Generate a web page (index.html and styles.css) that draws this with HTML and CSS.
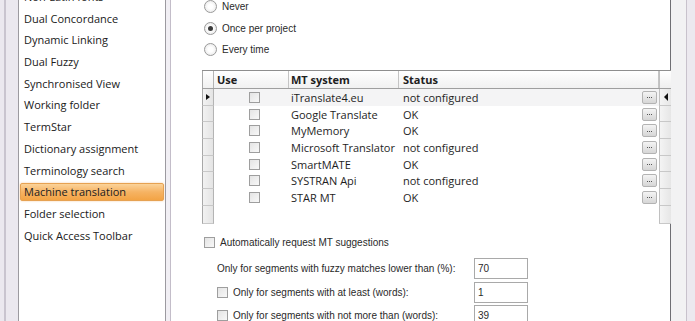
FILE: index.html
```html
<!DOCTYPE html>
<html>
<head>
<meta charset="utf-8">
<link rel="stylesheet" href="styles.css">
</head>
<body>
<div class="window">
  <div class="edge-left"><div class="edge-line"></div></div>
  <div class="nav">
    <ul class="nav-list">
      <li>Non-Latin fonts</li>
      <li>Dual Concordance</li>
      <li>Dynamic Linking</li>
      <li>Dual Fuzzy</li>
      <li>Synchronised View</li>
      <li>Working folder</li>
      <li>TermStar</li>
      <li>Dictionary assignment</li>
      <li>Terminology search</li>
      <li class="selected">Machine translation</li>
      <li>Folder selection</li>
      <li>Quick Access Toolbar</li>
    </ul>
  </div>
  <div class="gutter"></div>
  <div class="content">
    <div class="radios">
      <div class="radio-row"><span class="radio"></span><span>Never</span></div>
      <div class="radio-row"><span class="radio checked"></span><span>Once per project</span></div>
      <div class="radio-row"><span class="radio"></span><span>Every time</span></div>
    </div>
    <div class="grid">
      <div class="grid-row head">
        <div class="rh"></div>
        <div class="c use">Use</div>
        <div class="c sys">MT system</div>
        <div class="c stat">Status</div>
        <div class="c btn"></div>
        <div class="rh2"></div>
      </div>
      <div class="grid-row current">
        <div class="rh"><span class="tri-r"></span></div>
        <div class="c use"><span class="cb"></span></div>
        <div class="c sys">iTranslate4.eu</div>
        <div class="c stat">not configured</div>
        <div class="c btn"><span class="dots"><i></i><i></i><i></i></span></div>
        <div class="rh2"><span class="tri-l"></span></div>
      </div>
      <div class="grid-row">
        <div class="rh"></div>
        <div class="c use"><span class="cb"></span></div>
        <div class="c sys">Google Translate</div>
        <div class="c stat">OK</div>
        <div class="c btn"><span class="dots"><i></i><i></i><i></i></span></div>
        <div class="rh2"></div>
      </div>
      <div class="grid-row">
        <div class="rh"></div>
        <div class="c use"><span class="cb"></span></div>
        <div class="c sys">MyMemory</div>
        <div class="c stat">OK</div>
        <div class="c btn"><span class="dots"><i></i><i></i><i></i></span></div>
        <div class="rh2"></div>
      </div>
      <div class="grid-row">
        <div class="rh"></div>
        <div class="c use"><span class="cb"></span></div>
        <div class="c sys">Microsoft Translator</div>
        <div class="c stat">not configured</div>
        <div class="c btn"><span class="dots"><i></i><i></i><i></i></span></div>
        <div class="rh2"></div>
      </div>
      <div class="grid-row">
        <div class="rh"></div>
        <div class="c use"><span class="cb"></span></div>
        <div class="c sys">SmartMATE</div>
        <div class="c stat">OK</div>
        <div class="c btn"><span class="dots"><i></i><i></i><i></i></span></div>
        <div class="rh2"></div>
      </div>
      <div class="grid-row">
        <div class="rh"></div>
        <div class="c use"><span class="cb"></span></div>
        <div class="c sys">SYSTRAN Api</div>
        <div class="c stat">not configured</div>
        <div class="c btn"><span class="dots"><i></i><i></i><i></i></span></div>
        <div class="rh2"></div>
      </div>
      <div class="grid-row">
        <div class="rh"></div>
        <div class="c use"><span class="cb"></span></div>
        <div class="c sys">STAR MT</div>
        <div class="c stat">OK</div>
        <div class="c btn"><span class="dots"><i></i><i></i><i></i></span></div>
        <div class="rh2"></div>
      </div>
      <div class="grid-row empty">
        <div class="rh"></div>
        <div class="c fill"></div>
        <div class="rh2"></div>
      </div>
    </div>
    <div class="auto-row"><span class="cb"></span><span>Automatically request MT suggestions</span></div>
    <div class="opts">
      <div class="opt-row">
        <div class="opt-label">Only for segments with fuzzy matches lower than (%):</div>
        <div class="field">70</div>
      </div>
      <div class="opt-row">
        <div class="opt-label"><span class="cb"></span><span>Only for segments with at least (words):</span></div>
        <div class="field">1</div>
      </div>
      <div class="opt-row">
        <div class="opt-label"><span class="cb"></span><span>Only for segments with not more than (words):</span></div>
        <div class="field">39</div>
      </div>
    </div>
  </div>
  <div class="edge-right"><div class="edge-right-inner"></div></div>
</div>
</body>
</html>
```

FILE: styles.css
```css
html, body {
  margin: 0;
  padding: 0;
  background: #ffffff;
}
.window {
  width: 695px;
  height: 321px;
  overflow: hidden;
  display: flex;
  font-family: "Liberation Sans", Arial, sans-serif;
  font-size: 10px;
  color: #1e1e1e;
}
.edge-left {
  width: 18px;
  flex: none;
  background: #ebe8ef;
  display: flex;
}
.edge-line {
  width: 2px;
  margin-left: 4px;
  background: #c9c4cf;
}
.nav {
  width: 146px;
  flex: none;
  border-left: 1px solid #9c9aa0;
  border-right: 1px solid #9c9aa0;
  background: #ffffff;
  overflow: hidden;
}
.nav-list {
  list-style: none;
  margin: -12px 0 0 0;
  padding: 0;
  font-family: "Open Sans", "Noto Sans", sans-serif;
  font-size: 11px;
}
.nav-list li {
  height: 18px;
  line-height: 18px;
  margin: 0 1px 3.7px 1px;
  padding-left: 4px;
  white-space: nowrap;
  color: #202020;
}
.nav-list li.selected {
  background: linear-gradient(#fbd39a, #f6b363 50%, #f3a445);
  border: 1px solid #e6a252;
  border-radius: 2px;
  height: 16px;
  line-height: 16px;
  padding-left: 3px;
  box-shadow: 0 0 2px rgba(240, 150, 60, 0.5);
}
.gutter {
  width: 4px;
  flex: none;
  background: #f1eff4;
  border-right: 1px solid #c3bdc9;
}
.content {
  width: 500px;
  flex: none;
  background: #ffffff;
  border-right: 1px solid #6f6f74;
  padding-left: 31px;
  box-sizing: border-box;
  display: flex;
  flex-direction: column;
}
.content > * {
  flex-shrink: 0;
}
.radios {
  margin-top: -4px;
  padding-left: 2px;
}
.radio-row {
  height: 21.5px;
  display: flex;
  align-items: center;
  gap: 5px;
  color: #2a2a2a;
}
.radio {
  width: 11px;
  height: 11px;
  border-radius: 50%;
  border: 1px solid #9a9a9a;
  background: radial-gradient(circle at 50% 50%, #ffffff 30%, #e2e2e2 100%);
  display: flex;
  align-items: center;
  justify-content: center;
}
.radio.checked::after {
  content: "";
  width: 5px;
  height: 5px;
  border-radius: 50%;
  background: #3a3a3a;
}
.grid {
  margin-top: 9.5px;
  width: 469px;
  height: 153px;
  border-top: 1px solid #8e8e8e;
  display: flex;
  flex-direction: column;
  font-family: "Open Sans", "Noto Sans", sans-serif;
  font-size: 11px;
}
.grid-row {
  display: flex;
  height: 16.7px;
  flex-shrink: 0;
  align-items: stretch;
}
.grid-row.head {
  height: 17px;
  background: linear-gradient(#ffffff, #f1f1f1);
  border-bottom: 1px solid #9f9f9f;
  font-weight: bold;
  color: #202020;
}
.grid-row.current {
  background: #f4f4f5;
}
.grid-row.empty {
  flex: 1;
}
.rh {
  width: 12px;
  flex: none;
  background: linear-gradient(90deg, #f2f2f2, #e4e4e4);
  border-right: 1px solid #b4b4b4;
  border-bottom: 1px solid #c8c8c8;
  border-left: 1px solid #a8a8a8;
  box-sizing: border-box;
  display: flex;
  align-items: center;
  justify-content: center;
}
.head .rh {
  background: linear-gradient(#ffffff, #f0f0f0);
  border-bottom: none;
}
.rh2 {
  width: 12px;
  flex: none;
  background: linear-gradient(90deg, #f4f4f4, #e6e6e6);
  border-left: 1px solid #c0c0c0;
  border-bottom: 1px solid #c8c8c8;
  box-sizing: border-box;
  display: flex;
  align-items: center;
  justify-content: center;
}
.head .rh2 {
  background: linear-gradient(#ffffff, #efefef);
  border-bottom: none;
}
.c {
  display: flex;
  align-items: center;
  white-space: nowrap;
  overflow: hidden;
  box-sizing: border-box;
}
.use { width: 75px; padding-left: 3px; }
.sys { width: 110px; padding-left: 2px; }
.stat { width: 240px; padding-left: 4px; }
.btn { width: 20px; justify-content: center; }
.fill { flex: 1; }
.head .use, .head .sys {
  border-right: 1px solid #c4c4c4;
}
.head .stat {
  border-right: 1px solid #c4c4c4;
  width: 260px;
}
.head .btn { display: none; }
.grid-row:not(.head) .use {
  justify-content: flex-start;
  padding-left: 35px;
}
.cb {
  width: 11px;
  height: 11px;
  flex: none;
  border: 1px solid #9e9e9e;
  background: linear-gradient(135deg, #e4e4e4, #f8f8f8);
  box-sizing: border-box;
}
.tri-r {
  width: 0;
  height: 0;
  border-top: 3.5px solid transparent;
  border-bottom: 3.5px solid transparent;
  border-left: 4px solid #111;
}
.tri-l {
  width: 0;
  height: 0;
  border-top: 4px solid transparent;
  border-bottom: 4px solid transparent;
  border-right: 4px solid #111;
}
.dots {
  width: 15px;
  height: 13px;
  border: 1px solid #b3b3b3;
  border-radius: 2px;
  background: linear-gradient(#f4f4f4, #d6d6d6);
  box-sizing: border-box;
  display: flex;
  align-items: center;
  justify-content: center;
  gap: 1px;
  padding-top: 1px;
}
.dots i {
  width: 1px;
  height: 1px;
  background: #555;
}
.auto-row {
  margin-top: 10px;
  height: 16px;
  display: flex;
  align-items: center;
  gap: 5px;
  padding-left: 2px;
  color: #2a2a2a;
}
.opts {
  margin-top: 8px;
  padding-left: 15px;
  display: flex;
  flex-direction: column;
  gap: 2.5px;
}
.opt-row {
  display: flex;
  align-items: center;
  height: 21px;
  flex-shrink: 0;
  color: #2a2a2a;
}
.opt-label {
  width: 257px;
  display: flex;
  align-items: center;
  gap: 5px;
  white-space: nowrap;
}
.field {
  width: 54px;
  height: 21px;
  border: 1px solid #a9a9a9;
  box-sizing: border-box;
  padding-left: 3px;
  line-height: 19px;
  color: #2a2a2a;
}
.edge-right {
  flex: 1;
  background: #ece9ef;
  display: flex;
}
.edge-right-inner {
  width: 15px;
  background: #f2f2f3;
  border-right: 1px solid #c8c2cc;
}
```
